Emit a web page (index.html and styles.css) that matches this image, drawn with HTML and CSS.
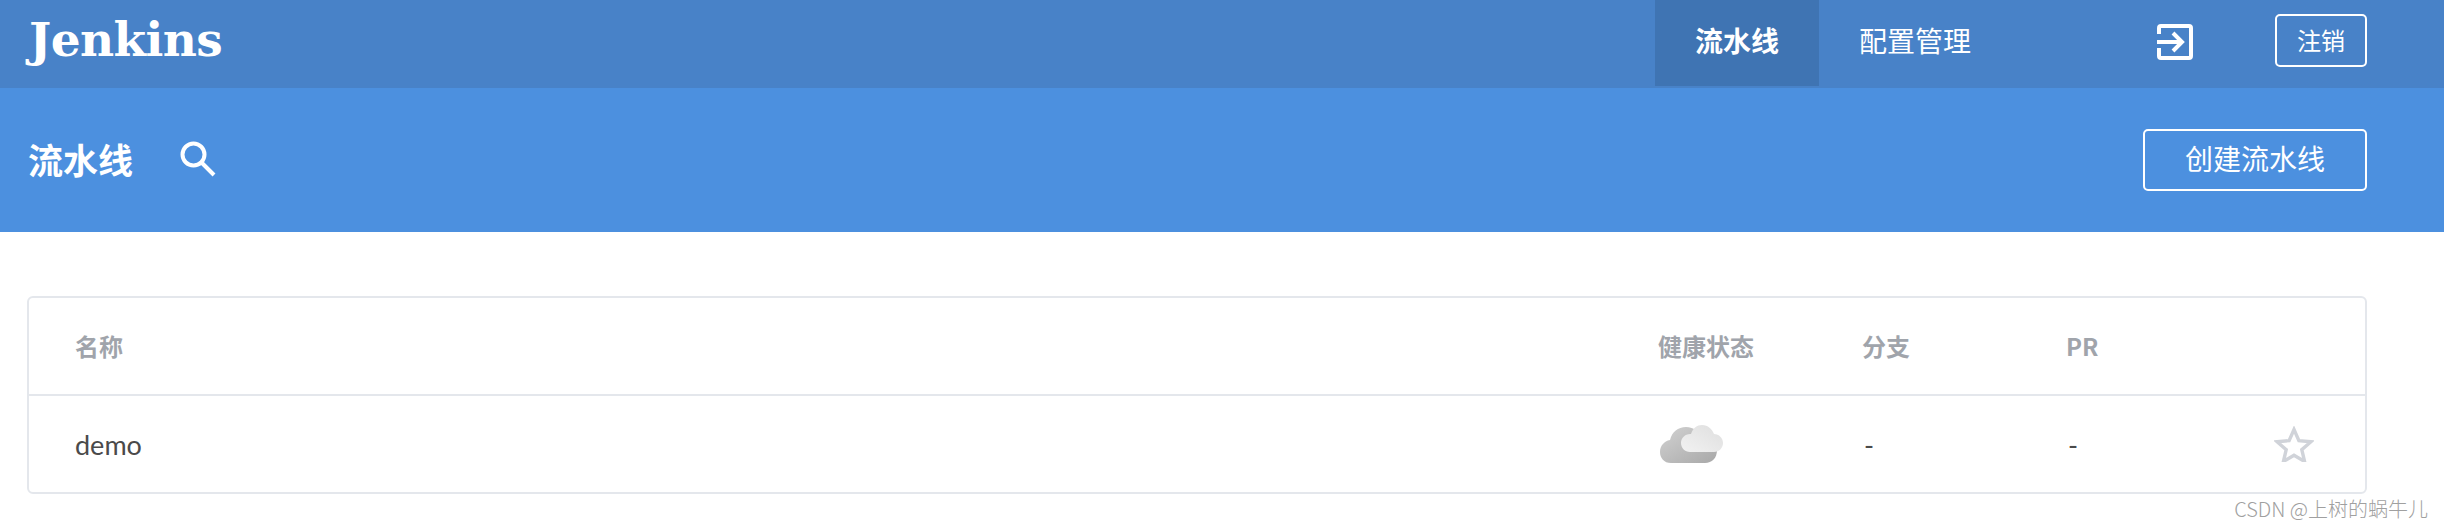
FILE: index.html
```html
<!DOCTYPE html>
<html lang="zh">
<head>
<meta charset="utf-8">
<title>Jenkins</title>
<link rel="stylesheet" href="styles.css">
</head>
<body>
<header class="topbar">
  <div class="logo">Jenkins</div>
  <nav class="nav">
    <a class="nav-item active">流水线</a>
    <a class="nav-item">配置管理</a>
  </nav>
  <svg class="exit-icon" width="36" height="36" viewBox="0 0 36 36" fill="none" stroke="#fff" stroke-width="4">
    <path d="M2 10V4a2 2 0 0 1 2-2h28a2 2 0 0 1 2 2v28a2 2 0 0 1-2 2H4a2 2 0 0 1-2-2v-8"/>
    <path d="M0 18h25M16 9l9 9-9 9"/>
  </svg>
  <a class="btn btn-small">注销</a>
</header>
<section class="subbar">
  <h1 class="title">流水线</h1>
  <svg class="search-icon" width="36" height="36" viewBox="0 0 36 36" fill="none" stroke="#fff" stroke-width="4">
    <circle cx="13.5" cy="13.5" r="11"/>
    <path d="M21.5 21.5L34 34"/>
  </svg>
  <a class="btn btn-large">创建流水线</a>
</section>
<main class="main">
  <div class="card">
    <div class="row head">
      <div>名称</div>
      <div>健康状态</div>
      <div>分支</div>
      <div>PR</div>
      <div></div>
    </div>
    <div class="row body">
      <div>demo</div>
      <div class="cell-icon">
        <svg width="64" height="40" viewBox="0 0 64 40">
          <defs>
            <linearGradient id="dark" x1="0" y1="0" x2="1" y2="1">
              <stop offset="0" stop-color="#d2d2d2"/>
              <stop offset="1" stop-color="#a8a8a8"/>
            </linearGradient>
            <linearGradient id="light" x1="0" y1="1" x2="1" y2="0">
              <stop offset="0" stop-color="#f2f2f2"/>
              <stop offset="1" stop-color="#dedede"/>
            </linearGradient>
          </defs>
          <path fill="url(#dark)" d="M11 39C4 39 0 34 0 28c0-6 4-11 10-12 2-8 8-13 16-13 8 0 14 5 17 11h2c7 0 12 5 12 12 0 8-5 13-12 13z"/>
          <path fill="url(#light)" d="M30 28c-5 0-9-4-9-9 0-5 4-9 9-9h1c2-6 6-9 11-9 6 0 10 4 12 9 5 0 9 4 9 9 0 5-4 9-9 9z"/>
        </svg>
      </div>
      <div>-</div>
      <div>-</div>
      <div class="cell-icon">
        <svg width="40" height="36" viewBox="0 0 40 36" fill="none" stroke="#d0d3d9" stroke-width="3.4" stroke-linejoin="miter">
          <path d="M20 3.5l4.9 11.1 12.1 1.1-9.2 8 2.8 11.8-10.6-6.3-10.6 6.3 2.8-11.8-9.2-8 12.1-1.1z"/>
        </svg>
      </div>
    </div>
  </div>
  <div class="watermark">CSDN @上树的蜗牛儿</div>
</main>
</body>
</html>
```

FILE: styles.css
```css
* { box-sizing: border-box; }
html, body { margin: 0; padding: 0; }
body {
  background: #fff;
  font-family: "Noto Sans CJK SC", "Noto Sans", sans-serif;
  color: #4a4a4a;
}
.topbar {
  height: 88px;
  background: #4882c8;
  color: #fff;
  display: flex;
  align-items: flex-start;
  padding: 0 77px 0 29px;
}
.logo {
  font-family: "DejaVu Serif", serif;
  font-weight: 700;
  font-size: 47px;
  letter-spacing: -0.6px;
  line-height: 80px;
}
.nav {
  margin-left: auto;
  display: flex;
  height: 86px;
}
.nav-item {
  display: flex;
  align-items: center;
  padding: 0 40px 6px;
  font-size: 28px;
  height: 86px;
}
.nav-item.active {
  background: #3f74b3;
  font-weight: 700;
}
.exit-icon {
  margin: 24px 82px 0 146px;
  flex: none;
}
.btn {
  display: flex;
  align-items: center;
  justify-content: center;
  border: 2px solid #fff;
  border-radius: 5px;
  color: #fff;
}
.btn-small {
  width: 92px;
  height: 53px;
  margin-top: 14px;
  padding-bottom: 2px;
  font-size: 24px;
}
.subbar {
  height: 144px;
  background: #4c90df;
  color: #fff;
  display: flex;
  align-items: center;
  padding: 0 77px 0 28px;
}
.title {
  margin: -4px 0 0;
  font-size: 35px;
  font-weight: 700;
}
.search-icon {
  margin-left: 47px;
  margin-top: -2px;
}
.btn-large {
  margin-left: auto;
  width: 224px;
  height: 62px;
  padding-bottom: 4px;
  font-size: 28px;
}
.main {
  padding: 64px 77px 0 27px;
}
.card {
  border: 2px solid #e4e7ec;
  border-radius: 6px;
  height: 198px;
}
.row {
  display: grid;
  align-items: center;
  padding-left: 46px;
  height: 96px;
}
.head {
  grid-template-columns: 1583px 204px 204px 207px 1fr;
  height: 98px;
  padding-bottom: 2px;
  border-bottom: 2px solid #e4e7ec;
  color: #a0a4ab;
  font-size: 24px;
  font-weight: 700;
}
.body {
  grid-template-columns: 1585px 204px 204px 206px 1fr;
  font-family: "Lato", "Noto Sans CJK SC", sans-serif;
  font-size: 27px;
}
.cell-icon {
  display: flex;
  align-items: center;
}
.watermark {
  text-align: right;
  margin: 1px -61px 0 0;
  font-size: 20px;
  line-height: 28px;
  font-weight: 300;
  color: #a0a0a0;
}
```
